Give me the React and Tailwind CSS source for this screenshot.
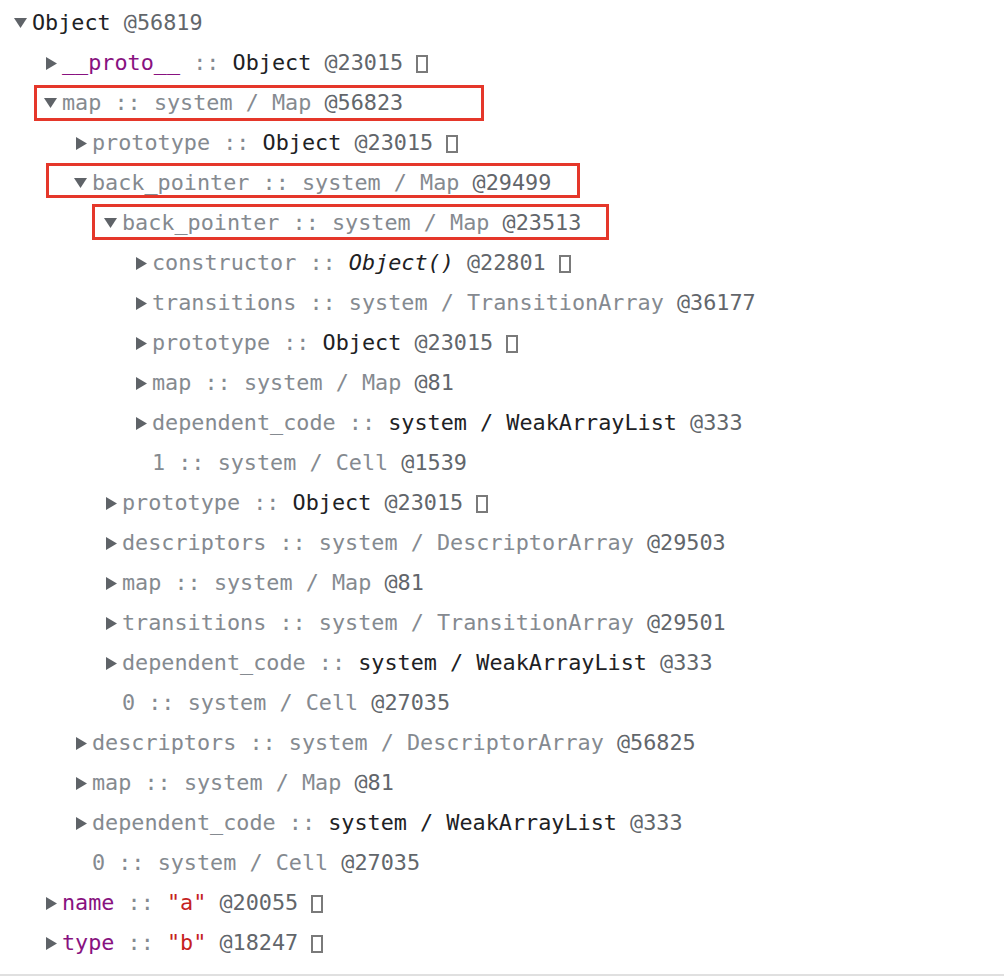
import React from "react";

const G = "text-[#858a90]";
const D = "text-[#202124]";
const I = "text-[#62666b]";
const P = "text-[#881280]";
const R = "text-[#c5221f]";

const pad = [
  "pl-[12px]",
  "pl-[42px]",
  "pl-[72px]",
  "pl-[102px]",
  "pl-[132px]",
];

const rows = [
  { l: 0, t: "open", s: [["Object", D], [" @56819", I]] },
  { l: 1, t: "closed", s: [["__proto__", P], [" :: ", G], ["Object", D], [" @23015 ", I]], box: true },
  { l: 1, t: "open", s: [["map", G], [" :: ", G], ["system / Map", G], [" @56823", I]] },
  { l: 2, t: "closed", s: [["prototype", G], [" :: ", G], ["Object", D], [" @23015 ", I]], box: true },
  { l: 2, t: "open", s: [["back_pointer", G], [" :: ", G], ["system / Map", G], [" @29499", I]] },
  { l: 3, t: "open", s: [["back_pointer", G], [" :: ", G], ["system / Map", G], [" @23513", I]] },
  { l: 4, t: "closed", s: [["constructor", G], [" :: ", G], ["Object()", D + " italic"], [" @22801 ", I]], box: true },
  { l: 4, t: "closed", s: [["transitions", G], [" :: ", G], ["system / TransitionArray", G], [" @36177", I]] },
  { l: 4, t: "closed", s: [["prototype", G], [" :: ", G], ["Object", D], [" @23015 ", I]], box: true },
  { l: 4, t: "closed", s: [["map", G], [" :: ", G], ["system / Map", G], [" @81", I]] },
  { l: 4, t: "closed", s: [["dependent_code", G], [" :: ", G], ["system / WeakArrayList", D], [" @333", I]] },
  { l: 4, t: "none", s: [["1", G], [" :: ", G], ["system / Cell", G], [" @1539", I]] },
  { l: 3, t: "closed", s: [["prototype", G], [" :: ", G], ["Object", D], [" @23015 ", I]], box: true },
  { l: 3, t: "closed", s: [["descriptors", G], [" :: ", G], ["system / DescriptorArray", G], [" @29503", I]] },
  { l: 3, t: "closed", s: [["map", G], [" :: ", G], ["system / Map", G], [" @81", I]] },
  { l: 3, t: "closed", s: [["transitions", G], [" :: ", G], ["system / TransitionArray", G], [" @29501", I]] },
  { l: 3, t: "closed", s: [["dependent_code", G], [" :: ", G], ["system / WeakArrayList", D], [" @333", I]] },
  { l: 3, t: "none", s: [["0", G], [" :: ", G], ["system / Cell", G], [" @27035", I]] },
  { l: 2, t: "closed", s: [["descriptors", G], [" :: ", G], ["system / DescriptorArray", G], [" @56825", I]] },
  { l: 2, t: "closed", s: [["map", G], [" :: ", G], ["system / Map", G], [" @81", I]] },
  { l: 2, t: "closed", s: [["dependent_code", G], [" :: ", G], ["system / WeakArrayList", D], [" @333", I]] },
  { l: 2, t: "none", s: [["0", G], [" :: ", G], ["system / Cell", G], [" @27035", I]] },
  { l: 1, t: "closed", s: [["name", P], [" :: ", G], ['"a"', R], [" @20055 ", I]], box: true },
  { l: 1, t: "closed", s: [["type", P], [" :: ", G], ['"b"', R], [" @18247 ", I]], box: true },
];

function Tri({ t }) {
  if (t === "open")
    return (
      <svg width="13" height="10" viewBox="0 0 13 10" className="ml-[2px]">
        <path d="M0 0 H13 L6.5 10 Z" fill="#5f6368" />
      </svg>
    );
  if (t === "closed")
    return (
      <svg width="11" height="13" viewBox="0 0 11 13" className="ml-[4px]">
        <path d="M0 0 L11 6.5 L0 13 Z" fill="#5f6368" />
      </svg>
    );
  return null;
}

export default function App() {
  return (
    <div
      className="relative w-[1004px] h-[976px] bg-white overflow-hidden"
      style={{ fontFamily: '"DejaVu Sans Mono", monospace' }}
    >
      <div className="pt-[3px] flex flex-col text-[21.8px]">
        {rows.map((r, i) => (
          <div key={i} className={"h-[40px] flex items-center whitespace-pre " + pad[r.l]}>
            <div className="w-[20px] h-[40px] flex items-center shrink-0">
              <Tri t={r.t} />
            </div>
            <span className="leading-[40px]">
              {r.s.map(([txt, c], j) => (
                <span key={j} className={c}>
                  {txt}
                </span>
              ))}
            </span>
            {r.box && (
              <span className="inline-block w-[12px] h-[18px] border-2 border-[#7a7a7a] mt-[2px]" />
            )}
          </div>
        ))}
      </div>

      <div className="absolute left-[34px] top-[85px] w-[450px] h-[36px] border-[3px] border-[#e5372a]" />
      <div className="absolute left-[46px] top-[163px] w-[534px] h-[35px] border-[3px] border-[#e5372a]" />
      <div className="absolute left-[92px] top-[204px] w-[517px] h-[36px] border-[3px] border-[#e5372a]" />

      <div className="absolute left-0 bottom-0 w-full h-[2px] bg-[#e0e0e0]" />
    </div>
  );
}
